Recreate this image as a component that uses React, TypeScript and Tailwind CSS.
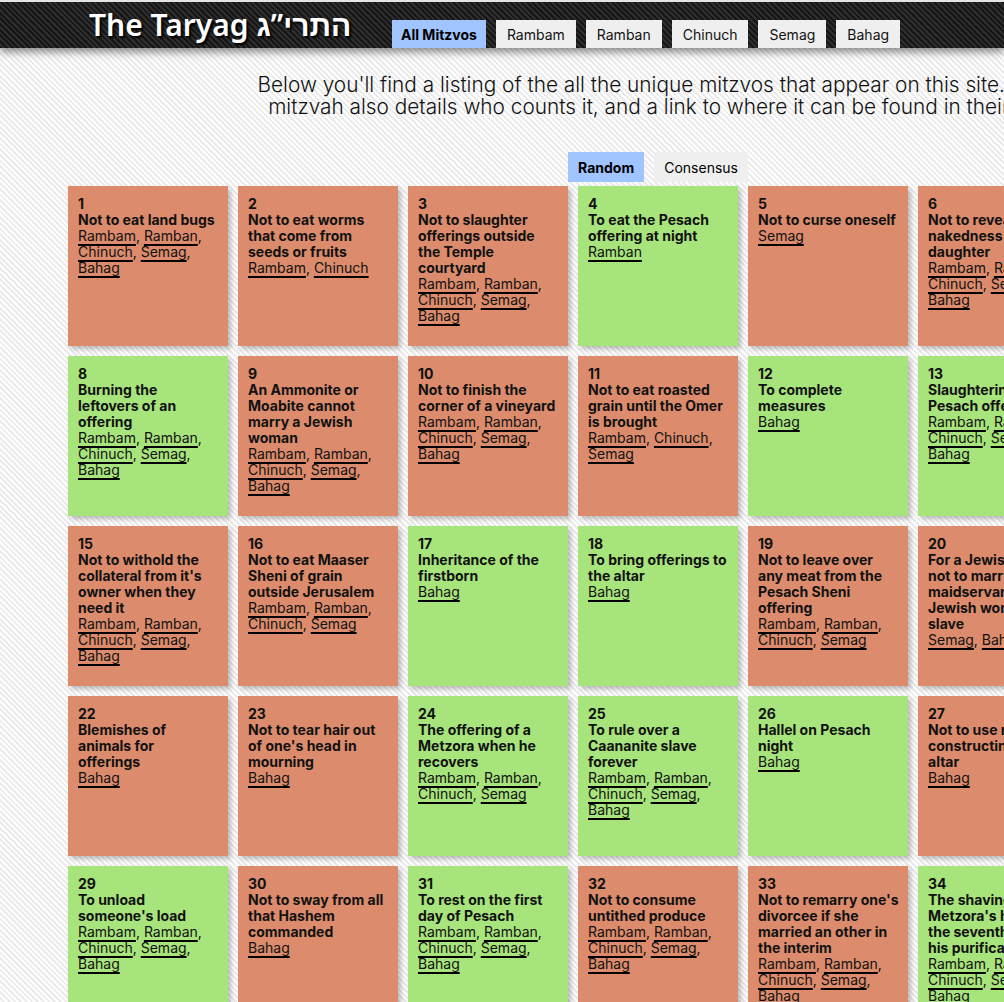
import React from "react";

type Source = "Rambam" | "Ramban" | "Chinuch" | "Semag" | "Bahag";

interface Mitzvah {
    num: number,
    title: string,
    sources: Source[],
    good: boolean
};

const ALL: Source[] = ["Rambam", "Ramban", "Chinuch", "Semag", "Bahag"];
const NO_BAHAG: Source[] = ["Rambam", "Ramban", "Chinuch", "Semag"];

const mitzvos: Mitzvah[] = [
    { num: 1, title: "Not to eat land bugs", sources: ALL, good: false },
    { num: 2, title: "Not to eat worms that come from seeds or fruits", sources: ["Rambam", "Chinuch"], good: false },
    { num: 3, title: "Not to slaughter offerings outside the Temple courtyard", sources: ALL, good: false },
    { num: 4, title: "To eat the Pesach offering at night", sources: ["Ramban"], good: true },
    { num: 5, title: "Not to curse oneself", sources: ["Semag"], good: false },
    { num: 6, title: "Not to reveal the nakedness of one's daughter", sources: ALL, good: false },
    { num: 7, title: "To eat matzah on the first night of Pesach", sources: ALL, good: true },
    { num: 8, title: "Burning the leftovers of an offering", sources: ALL, good: true },
    { num: 9, title: "An Ammonite or Moabite cannot marry a Jewish woman", sources: ALL, good: false },
    { num: 10, title: "Not to finish the corner of a vineyard", sources: ALL, good: false },
    { num: 11, title: "Not to eat roasted grain until the Omer is brought", sources: ["Rambam", "Chinuch", "Semag"], good: false },
    { num: 12, title: "To complete measures", sources: ["Bahag"], good: true },
    { num: 13, title: "Slaughtering the Pesach offering", sources: ALL, good: true },
    { num: 14, title: "Not to eat chametz on Pesach", sources: ALL, good: false },
    { num: 15, title: "Not to withold the collateral from it's owner when they need it", sources: ALL, good: false },
    { num: 16, title: "Not to eat Maaser Sheni of grain outside Jerusalem", sources: NO_BAHAG, good: false },
    { num: 17, title: "Inheritance of the firstborn", sources: ["Bahag"], good: true },
    { num: 18, title: "To bring offerings to the altar", sources: ["Bahag"], good: true },
    { num: 19, title: "Not to leave over any meat from the Pesach Sheni offering", sources: NO_BAHAG, good: false },
    { num: 20, title: "For a Jewish master not to marry a maidservant to a Jewish woman slave", sources: ["Semag", "Bahag"], good: false },
    { num: 21, title: "To count the Omer", sources: ALL, good: true },
    { num: 22, title: "Blemishes of animals for offerings", sources: ["Bahag"], good: false },
    { num: 23, title: "Not to tear hair out of one's head in mourning", sources: ["Bahag"], good: false },
    { num: 24, title: "The offering of a Metzora when he recovers", sources: NO_BAHAG, good: true },
    { num: 25, title: "To rule over a Caananite slave forever", sources: ALL, good: true },
    { num: 26, title: "Hallel on Pesach night", sources: ["Bahag"], good: true },
    { num: 27, title: "Not to use metal for constructing the altar", sources: ["Bahag"], good: false },
    { num: 28, title: "To honor the elderly", sources: ALL, good: true },
    { num: 29, title: "To unload someone's load", sources: ALL, good: true },
    { num: 30, title: "Not to sway from all that Hashem commanded", sources: ["Bahag"], good: false },
    { num: 31, title: "To rest on the first day of Pesach", sources: ALL, good: true },
    { num: 32, title: "Not to consume untithed produce", sources: ALL, good: false },
    { num: 33, title: "Not to remarry one's divorcee if she married an other in the interim", sources: ALL, good: false },
    { num: 34, title: "The shaving of the Metzora's hair on the seventh day of his purification", sources: ALL, good: true },
    { num: 35, title: "Not to leave the Pesach offering until morning", sources: ALL, good: false }
];

const navTabs = ["All Mitzvos", "Rambam", "Ramban", "Chinuch", "Semag", "Bahag"];

function Header() {
    return (
        <div className="w-full h-[48px] border-t-[2px] border-[#e4e4e4] bg-[repeating-linear-gradient(45deg,#161616_0px,#161616_2px,#2e2e2e_2px,#2e2e2e_4px)] shadow-[0_4px_8px_rgba(0,0,0,0.45)] flex flex-row items-end relative z-10">
            <div className="pl-[89px] w-[392px] h-full flex items-center">
                <h1 className="text-white text-[30px] leading-none font-semibold whitespace-nowrap [text-shadow:2px_2px_2px_#000] font-['Noto_Sans',sans-serif]">
                    The Taryag התרי”ג
                </h1>
            </div>
            <div className="flex flex-row gap-[10px]">
                {navTabs.map((tab, index) => (
                    <div
                        key={`nav-${index}`}
                        className={
                            index === 0
                                ? "h-[28px] px-[9px] flex items-center bg-[#a0c4ff] text-[14px] font-bold text-black"
                                : "h-[28px] px-[11px] flex items-center bg-[#efefef] text-[14px] text-[#111]"
                        }
                    >
                        {tab}
                    </div>
                ))}
            </div>
        </div>
    );
};

function MitzvahCard({ item }: { item: Mitzvah }) {
    return (
        <div className={`w-[160px] h-[160px] pt-[10px] pl-[10px] pr-[9px] shadow-[3px_3px_5px_rgba(0,0,0,0.25)] text-[14px] leading-[16px] text-[#111] ${item.good ? "bg-[#a8e47c]" : "bg-[#dc8c6c]"}`}>
            <div className="font-bold">{item.num}</div>
            <div className="font-bold">{item.title}</div>
            <div>
                {item.sources.map((src, index) => (
                    <span key={`src-${item.num}-${index}`}>
                        <a className="underline decoration-[2px] underline-offset-[3px] decoration-black cursor-pointer">{src}</a>
                        {index < item.sources.length - 1 && ", "}
                    </span>
                ))}
            </div>
        </div>
    );
};

export default function App() {
    return (
        <div className="w-screen h-screen overflow-hidden bg-[repeating-linear-gradient(45deg,#ffffff_0px,#ffffff_2px,#ebebeb_2px,#ebebeb_4px)] font-['Inter',sans-serif]">
            <Header />
            <div className="w-[1316px] px-[68px] flex flex-col items-center">
                <p className="mt-[26px] text-center text-[20.8px] leading-[22px] font-light text-[#111] whitespace-nowrap">
                    Below you'll find a listing of the all the unique mitzvos that appear on this site. Each<br />
                    mitzvah also details who counts it, and a link to where it can be found in their list.
                </p>
                <div className="mt-[34px] flex flex-row gap-[10px]">
                    <div className="h-[30px] px-[10px] flex items-center bg-[#a0c4ff] text-[14px] font-bold">Random</div>
                    <div className="h-[30px] px-[10px] flex items-center bg-[#efefef] text-[14px]">Consensus</div>
                </div>
                <div className="mt-[4px] grid grid-cols-[repeat(7,160px)] gap-[10px]">
                    {mitzvos.map((item) => (
                        <MitzvahCard key={`mitzvah-${item.num}`} item={item} />
                    ))}
                </div>
            </div>
        </div>
    );
};
